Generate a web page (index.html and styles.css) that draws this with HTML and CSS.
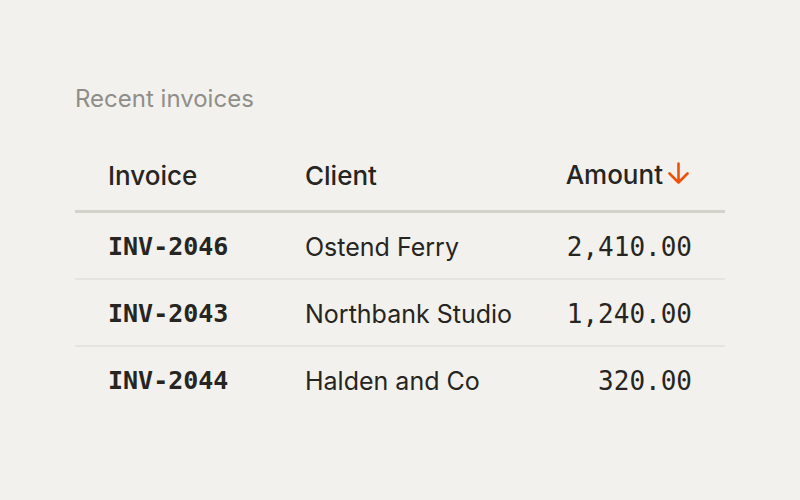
FILE: index.html
```html
<!DOCTYPE html>
<html>
    <head>
        <title>Recent invoices</title>
        <link rel="stylesheet" href="styles.css">
    </head>
    <body>
        <div class="panel">
            <h2 class="title">Recent invoices</h2>
            <table class="invoices">
                <thead>
                    <tr>
                        <th class="col-invoice">Invoice</th>
                        <th class="col-client">Client</th>
                        <th class="col-amount">Amount<span class="sort-arrow"><svg width="24" height="23" viewBox="0 0 24 23"><path d="M10.5 1.5 V20.5 M1.5 11.5 L10.5 20.5 L19.5 11.5" fill="none" stroke="#ec520c" stroke-width="2.6" stroke-linecap="round" stroke-linejoin="round"/></svg></span></th>
                    </tr>
                </thead>
                <tbody>
                    <tr>
                        <td class="col-invoice mono">INV-2046</td>
                        <td class="col-client">Ostend Ferry</td>
                        <td class="col-amount mono">2,410.00</td>
                    </tr>
                    <tr>
                        <td class="col-invoice mono">INV-2043</td>
                        <td class="col-client">Northbank Studio</td>
                        <td class="col-amount mono">1,240.00</td>
                    </tr>
                    <tr>
                        <td class="col-invoice mono">INV-2044</td>
                        <td class="col-client">Halden and Co</td>
                        <td class="col-amount mono">320.00</td>
                    </tr>
                </tbody>
            </table>
        </div>
    </body>
</html>
```

FILE: styles.css
```css
html, body {
    margin: 0;
    background-color: #f2f1ed;
}

body {
    font-family: "Inter", "Liberation Sans", sans-serif;
    color: #262521;
}

.panel {
    padding: 84px 75px 0 75px;
}

.title {
    margin: 0 0 45px 0;
    font-size: 24px;
    font-weight: 400;
    color: #8f8e89;
    line-height: 30px;
}

.invoices {
    width: 650px;
    table-layout: fixed;
    border-collapse: collapse;
}

.invoices th,
.invoices td {
    white-space: nowrap;
}

.invoices th {
    font-size: 26px;
    font-weight: 500;
    text-align: left;
    line-height: 32px;
    padding: 0 33px 18px 33px;
    border-bottom: 3px solid #d4d3cb;
}

.invoices td {
    font-size: 25px;
    line-height: 30px;
    padding: 19px 33px 16px 33px;
    border-bottom: 2px solid #e5e4df;
}

.invoices tbody tr:last-child td {
    border-bottom: none;
}

.col-invoice {
    width: 131px;
}

.col-client {
    width: 150px;
}

.invoices .col-amount {
    text-align: right;
}

.mono {
    font-family: "DejaVu Sans Mono", monospace;
}

td.col-invoice {
    font-weight: bold;
}

.invoices td.col-amount {
    font-size: 26px;
}

.sort-arrow {
    display: inline-block;
    margin-left: 5px;
    vertical-align: -1px;
}
```
